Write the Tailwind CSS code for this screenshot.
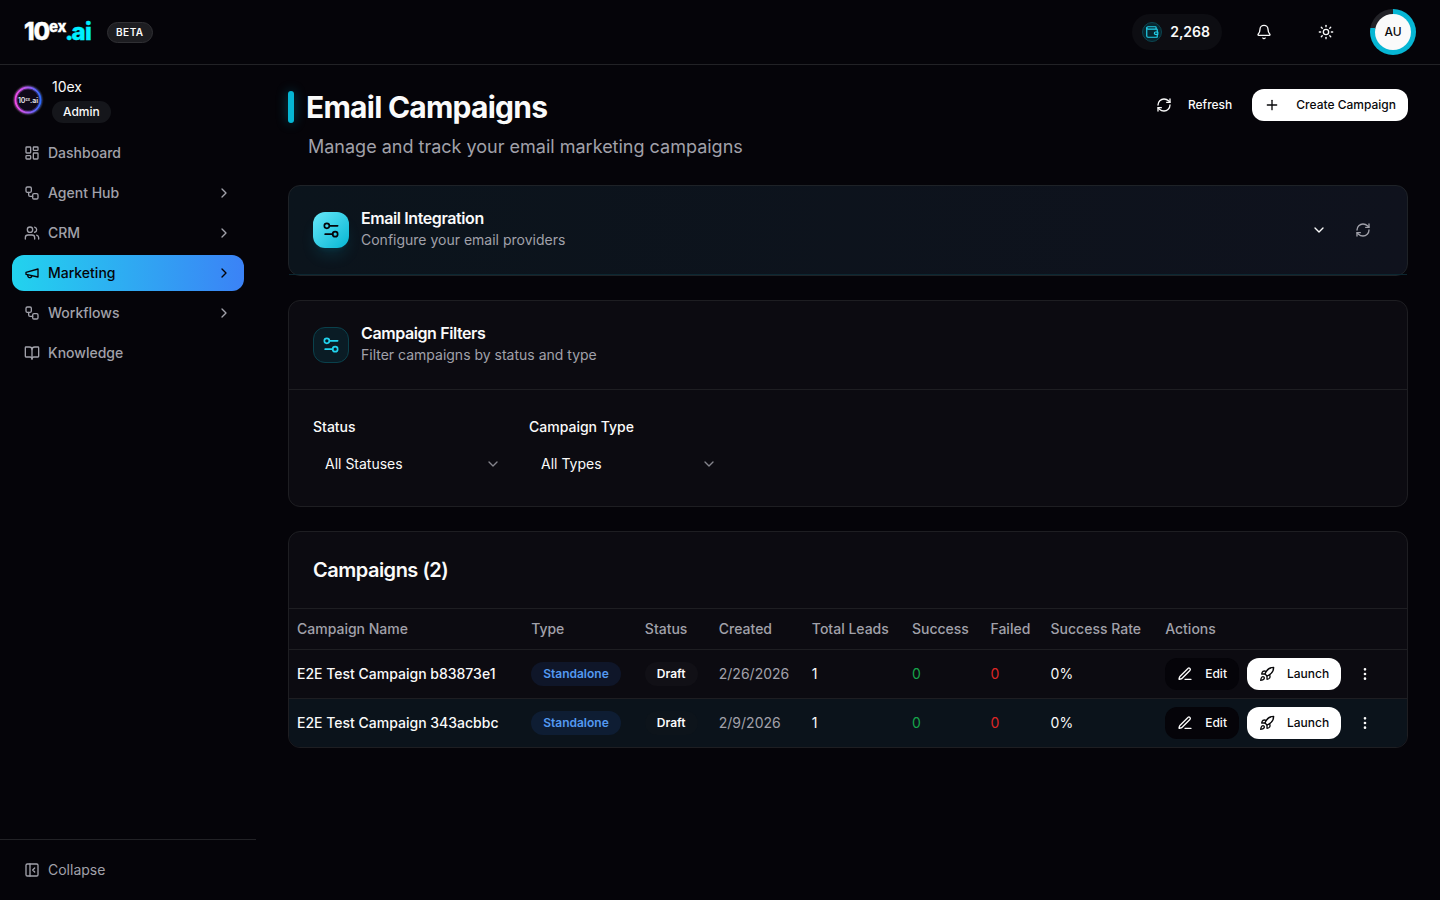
<!DOCTYPE html>
<html lang="en">
<head>
    <meta charset="UTF-8">
    <meta name="viewport" content="width=device-width, initial-scale=1.0">
    <title>10ex.ai - Email Campaigns</title>
    <script src="https://cdn.jsdelivr.net/npm/@tailwindcss/browser@4"></script>
</head>
<body class="min-h-screen flex flex-col bg-[#050409] text-[#fafafa] text-sm font-['Inter',sans-serif] antialiased">

    <!-- Icon sprite -->
    <svg class="hidden" aria-hidden="true">
        <symbol id="dashboard" viewBox="0 0 24 24"><rect width="7" height="9" x="3" y="3" rx="1"/><rect width="7" height="5" x="14" y="3" rx="1"/><rect width="7" height="9" x="14" y="12" rx="1"/><rect width="7" height="5" x="3" y="16" rx="1"/></symbol>
        <symbol id="workflow" viewBox="0 0 24 24"><rect width="8" height="8" x="3" y="3" rx="2"/><path d="M7 11v4a2 2 0 0 0 2 2h4"/><rect width="8" height="8" x="13" y="13" rx="2"/></symbol>
        <symbol id="users" viewBox="0 0 24 24"><path d="M16 21v-2a4 4 0 0 0-4-4H6a4 4 0 0 0-4 4v2"/><circle cx="9" cy="7" r="4"/><path d="M22 21v-2a4 4 0 0 0-3-3.87"/><path d="M16 3.13a4 4 0 0 1 0 7.75"/></symbol>
        <symbol id="megaphone" viewBox="0 0 24 24"><path d="m3 11 18-5v12L3 14v-3z"/><path d="M11.6 16.8a3 3 0 1 1-5.8-1.6"/></symbol>
        <symbol id="book" viewBox="0 0 24 24"><path d="M12 7v14"/><path d="M3 18a1 1 0 0 1-1-1V4a1 1 0 0 1 1-1h5a4 4 0 0 1 4 4 4 4 0 0 1 4-4h5a1 1 0 0 1 1 1v13a1 1 0 0 1-1 1h-6a3 3 0 0 0-3 3 3 3 0 0 0-3-3z"/></symbol>
        <symbol id="chevron-right" viewBox="0 0 24 24"><path d="m9 18 6-6-6-6"/></symbol>
        <symbol id="chevron-down" viewBox="0 0 24 24"><path d="m6 9 6 6 6-6"/></symbol>
        <symbol id="panel-close" viewBox="0 0 24 24"><rect width="18" height="18" x="3" y="3" rx="2"/><path d="M9 3v18"/><path d="m16 15-3-3 3-3"/></symbol>
        <symbol id="refresh" viewBox="0 0 24 24"><path d="M3 12a9 9 0 0 1 9-9 9.75 9.75 0 0 1 6.74 2.74L21 8"/><path d="M21 3v5h-5"/><path d="M21 12a9 9 0 0 1-9 9 9.75 9.75 0 0 1-6.74-2.74L3 16"/><path d="M8 16H3v5"/></symbol>
        <symbol id="plus" viewBox="0 0 24 24"><path d="M5 12h14"/><path d="M12 5v14"/></symbol>
        <symbol id="settings" viewBox="0 0 24 24"><path d="M20 7h-9"/><path d="M14 17H5"/><circle cx="17" cy="17" r="3"/><circle cx="7" cy="7" r="3"/></symbol>
        <symbol id="pen" viewBox="0 0 24 24"><path d="M12 20h9"/><path d="M16.376 3.622a1 1 0 0 1 3.002 3.002L7.368 18.635a2 2 0 0 1-.855.506l-2.872.838a.5.5 0 0 1-.62-.62l.838-2.872a2 2 0 0 1 .506-.854z"/></symbol>
        <symbol id="rocket" viewBox="0 0 24 24"><path d="M4.5 16.5c-1.5 1.26-2 5-2 5s3.74-.5 5-2c.71-.84.7-2.13-.09-2.91a2.18 2.18 0 0 0-2.91-.09z"/><path d="m12 15-3-3a22 22 0 0 1 2-3.95A12.88 12.88 0 0 1 22 2c0 2.72-.78 7.5-6 11a22.35 22.35 0 0 1-4 2z"/><path d="M9 12H4s.55-3.03 2-4c1.62-1.08 5 0 5 0"/><path d="M12 15v5s3.03-.55 4-2c1.08-1.62 0-5 0-5"/></symbol>
        <symbol id="more" viewBox="0 0 24 24"><circle cx="12" cy="12" r="1"/><circle cx="12" cy="5" r="1"/><circle cx="12" cy="19" r="1"/></symbol>
        <symbol id="bell" viewBox="0 0 24 24"><path d="M10.268 21a2 2 0 0 0 3.464 0"/><path d="M3.262 15.326A1 1 0 0 0 4 17h16a1 1 0 0 0 .74-1.673C19.41 13.956 18 12.499 18 8A6 6 0 0 0 6 8c0 4.499-1.411 5.956-2.738 7.326"/></symbol>
        <symbol id="sun" viewBox="0 0 24 24"><circle cx="12" cy="12" r="4"/><path d="M12 2v2"/><path d="M12 20v2"/><path d="m4.93 4.93 1.41 1.41"/><path d="m17.66 17.66 1.41 1.41"/><path d="M2 12h2"/><path d="M20 12h2"/><path d="m6.34 17.66-1.41 1.41"/><path d="m19.07 4.93-1.41 1.41"/></symbol>
        <symbol id="wallet" viewBox="0 0 24 24"><path d="M19 7V4a1 1 0 0 0-1-1H5a2 2 0 0 0 0 4h15a1 1 0 0 1 1 1v4"/><path d="M21 16v4a1 1 0 0 1-1 1H5a2 2 0 0 1-2-2V5"/><path d="M22 12h-4a2 2 0 0 0 0 4h4z"/></symbol>
    </svg>

    <header class="h-[65px] shrink-0 flex items-center justify-between px-6 border-b border-[#222226]">
        <div class="flex items-center gap-4">
            <a href="#" aria-label="10ex.ai home">
                <svg class="w-[67px] h-8 overflow-visible" viewBox="0 0 67 32" font-family="Inter, sans-serif" font-weight="800">
                    <text x="0 9.500" y="24" font-size="24" fill="#fff" stroke="#fff" stroke-width=".4">10</text>
                    <text x="25 33.500" y="16" font-size="15" fill="#fff" stroke="#fff" stroke-width=".3">ex</text>
                    <text x="41 47.500 61" y="24" font-size="24" fill="#00f0ff" stroke="#00f0ff" stroke-width=".4">.ai</text>
                </svg>
            </a>
            <span class="h-[21px] flex items-center px-2 rounded-full border border-[#303034] bg-[#1d1d21] text-[10px] font-semibold tracking-wider">BETA</span>
        </div>
        <div class="flex items-center gap-6">
            <div class="h-9 flex items-center gap-2 pl-[10px] pr-3 rounded-full bg-[#0d0d12]">
                <span class="size-5 flex items-center justify-center rounded-full border border-[#0b4550] bg-[#08262f] text-[#22d3ee]">
                    <svg class="size-[14px] shrink-0 fill-none stroke-current stroke-2" stroke-linecap="round" stroke-linejoin="round"><use href="#wallet"/></svg>
                </span>
                <span class="font-semibold">2,268</span>
            </div>
            <div class="flex items-center gap-[26px]">
                <button type="button" aria-label="Notifications" class="size-9 flex items-center justify-center"><svg class="size-4 fill-none stroke-current stroke-2" stroke-linecap="round" stroke-linejoin="round"><use href="#bell"/></svg></button>
                <button type="button" aria-label="Toggle theme" class="size-9 flex items-center justify-center"><svg class="size-4 fill-none stroke-current stroke-2" stroke-linecap="round" stroke-linejoin="round"><use href="#sun"/></svg></button>
                <button type="button" aria-label="Account" class="size-[46px] flex items-center justify-center rounded-full bg-[conic-gradient(#06b6d4_0_78%,#222227_78%)]">
                    <span class="size-9 flex items-center justify-center rounded-full bg-[#fafafa] text-[#09090b] text-xs font-medium">AU</span>
                </button>
            </div>
        </div>
    </header>

    <div class="flex-1 flex">
        <aside class="w-64 shrink-0 flex flex-col">
            <div class="flex items-center gap-2 p-3">
                <svg class="size-8" viewBox="0 0 32 32">
                    <defs>
                        <linearGradient id="ring" x1="0" x2="1"><stop offset="0" stop-color="#f04be8"/><stop offset=".5" stop-color="#a45cf0"/><stop offset="1" stop-color="#2f6bff"/></linearGradient>
                    </defs>
                    <circle cx="16" cy="16" r="15.500" fill="#17151d"/>
                    <circle cx="16" cy="16" r="12.500" fill="#0f0818" stroke="url(#ring)" stroke-opacity=".35" stroke-width="4"/>
                    <circle cx="16" cy="16" r="12.500" fill="none" stroke="url(#ring)" stroke-width="1.800"/>
                    <text x="16" y="18.500" text-anchor="middle" font-family="Inter, sans-serif" font-weight="600" font-size="7" fill="#e8e8ee">10<tspan font-size="4" dy="-2">ex</tspan><tspan dy="2">.ai</tspan></text>
                </svg>
                <div class="flex flex-col items-start gap-1">
                    <span class="leading-5">10ex</span>
                    <span class="h-[22px] flex items-center px-[11px] rounded-full bg-[#15161b] text-xs font-medium">Admin</span>
                </div>
            </div>
            <nav class="flex-1 flex flex-col gap-1 px-3 font-medium text-[#a1a1aa]">
                <a href="#" class="h-9 flex items-center gap-2 px-3 rounded-xl"><svg class="size-4 fill-none stroke-current stroke-2" stroke-linecap="round" stroke-linejoin="round"><use href="#dashboard"/></svg>Dashboard</a>
                <a href="#" class="h-9 flex items-center gap-2 px-3 rounded-xl"><svg class="size-4 fill-none stroke-current stroke-2" stroke-linecap="round" stroke-linejoin="round"><use href="#workflow"/></svg>Agent Hub<svg class="size-4 ml-auto fill-none stroke-current stroke-2" stroke-linecap="round" stroke-linejoin="round"><use href="#chevron-right"/></svg></a>
                <a href="#" class="h-9 flex items-center gap-2 px-3 rounded-xl"><svg class="size-4 fill-none stroke-current stroke-2" stroke-linecap="round" stroke-linejoin="round"><use href="#users"/></svg>CRM<svg class="size-4 ml-auto fill-none stroke-current stroke-2" stroke-linecap="round" stroke-linejoin="round"><use href="#chevron-right"/></svg></a>
                <a href="#" class="h-9 flex items-center gap-2 px-3 rounded-xl bg-linear-to-r/srgb from-[#22d3ee] to-[#3b82f6] text-[#050409]"><svg class="size-4 fill-none stroke-current stroke-2" stroke-linecap="round" stroke-linejoin="round"><use href="#megaphone"/></svg>Marketing<svg class="size-4 ml-auto fill-none stroke-current stroke-2" stroke-linecap="round" stroke-linejoin="round"><use href="#chevron-right"/></svg></a>
                <a href="#" class="h-9 flex items-center gap-2 px-3 rounded-xl"><svg class="size-4 fill-none stroke-current stroke-2" stroke-linecap="round" stroke-linejoin="round"><use href="#workflow"/></svg>Workflows<svg class="size-4 ml-auto fill-none stroke-current stroke-2" stroke-linecap="round" stroke-linejoin="round"><use href="#chevron-right"/></svg></a>
                <a href="#" class="h-9 flex items-center gap-2 px-3 rounded-xl"><svg class="size-4 fill-none stroke-current stroke-2" stroke-linecap="round" stroke-linejoin="round"><use href="#book"/></svg>Knowledge</a>
            </nav>
            <div class="p-3 border-t border-[#222226]">
                <button type="button" class="w-full h-9 flex items-center gap-2 px-3 text-[#a1a1aa]"><svg class="size-4 fill-none stroke-current stroke-2" stroke-linecap="round" stroke-linejoin="round"><use href="#panel-close"/></svg>Collapse</button>
            </div>
        </aside>

        <main class="flex-1 min-w-0 flex flex-col gap-6 px-8 py-6">
            <div class="flex items-start justify-between">
                <div class="flex flex-col gap-2">
                    <div class="flex items-center gap-3">
                        <span class="w-[6px] h-8 rounded-full bg-[#06b6d4] shadow-[0_0_12px_rgba(6,182,212,0.4)]"></span>
                        <h1 class="text-3xl font-bold tracking-tight">Email Campaigns</h1>
                    </div>
                    <p class="pl-5 text-lg text-[#a1a1aa]">Manage and track your email marketing campaigns</p>
                </div>
                <div class="flex gap-2 text-xs font-medium">
                    <button type="button" class="h-8 flex items-center gap-4 px-3 rounded-xl"><svg class="size-4 fill-none stroke-current stroke-2" stroke-linecap="round" stroke-linejoin="round"><use href="#refresh"/></svg>Refresh</button>
                    <button type="button" class="h-8 flex items-center gap-4 px-3 rounded-xl bg-white text-[#09090b]"><svg class="size-4 fill-none stroke-current stroke-2" stroke-linecap="round" stroke-linejoin="round"><use href="#plus"/></svg>Create Campaign</button>
                </div>
            </div>

            <section class="rounded-xl border border-[#1e2227] bg-linear-to-r/srgb from-[#0b141c] to-[#0f121d]">
                <div class="flex items-center gap-3 p-6 border-b border-[#0c2731]">
                    <span class="size-9 flex items-center justify-center rounded-xl bg-linear-to-br/srgb from-[#67e8f9] to-[#06b6d4] text-[#050409] shadow-lg shadow-[#06b6d4]/15"><svg class="size-5 fill-none stroke-current stroke-2" stroke-linecap="round" stroke-linejoin="round"><use href="#settings"/></svg></span>
                    <div class="flex flex-col gap-1">
                        <h2 class="text-base leading-4 font-semibold tracking-tight">Email Integration</h2>
                        <p class="text-[#a1a1aa]">Configure your email providers</p>
                    </div>
                    <div class="ml-auto flex items-center gap-2">
                        <button type="button" aria-label="Expand" class="w-8 h-9 flex items-center justify-center"><svg class="size-4 fill-none stroke-current stroke-2" stroke-linecap="round" stroke-linejoin="round"><use href="#chevron-down"/></svg></button>
                        <button type="button" aria-label="Reload providers" class="w-10 h-9 flex items-center justify-center text-[#a1a1aa]"><svg class="size-4 fill-none stroke-current stroke-2" stroke-linecap="round" stroke-linejoin="round"><use href="#refresh"/></svg></button>
                    </div>
                </div>
            </section>

            <section class="rounded-xl border border-[#1e1e22] bg-[#0c0b11]">
                <div class="flex items-center gap-3 p-6 border-b border-[#1e1e22]">
                    <span class="size-9 flex items-center justify-center rounded-xl border border-[#0a414c] bg-[#0a1c25] text-[#22d3ee]"><svg class="size-5 fill-none stroke-current stroke-2" stroke-linecap="round" stroke-linejoin="round"><use href="#settings"/></svg></span>
                    <div class="flex flex-col gap-1">
                        <h2 class="text-base leading-4 font-semibold tracking-tight">Campaign Filters</h2>
                        <p class="text-[#a1a1aa]">Filter campaigns by status and type</p>
                    </div>
                </div>
                <div class="flex flex-wrap gap-4 p-6">
                    <div class="w-[200px]">
                        <label for="status" class="block mb-[6px] leading-[26px] font-medium">Status</label>
                        <div class="relative">
                            <select id="status" class="w-full h-9 appearance-none px-3 rounded-xl bg-transparent">
                                <option>All Statuses</option>
                            </select>
                            <svg class="absolute right-3 top-[10px] size-4 pointer-events-none text-[#85858c] fill-none stroke-current stroke-2" stroke-linecap="round" stroke-linejoin="round"><use href="#chevron-down"/></svg>
                        </div>
                    </div>
                    <div class="w-[200px]">
                        <label for="type" class="block mb-[6px] leading-[26px] font-medium">Campaign Type</label>
                        <div class="relative">
                            <select id="type" class="w-full h-9 appearance-none px-3 rounded-xl bg-transparent">
                                <option>All Types</option>
                            </select>
                            <svg class="absolute right-3 top-[10px] size-4 pointer-events-none text-[#85858c] fill-none stroke-current stroke-2" stroke-linecap="round" stroke-linejoin="round"><use href="#chevron-down"/></svg>
                        </div>
                    </div>
                </div>
            </section>

            <section class="rounded-xl border border-[#1e1e22] bg-[#0c0b11] overflow-hidden">
                <h2 class="p-6 text-xl leading-7 font-semibold tracking-tight border-b border-[#1e1e22]">Campaigns (2)</h2>
                <table class="w-full text-left">
                    <thead>
                        <tr class="border-b border-[#1e1e22] text-[#a1a1aa]">
                            <th class="h-10 px-2 font-medium">Campaign Name</th>
                            <th class="px-2 font-medium">Type</th>
                            <th class="px-2 font-medium">Status</th>
                            <th class="px-2 font-medium">Created</th>
                            <th class="px-2 font-medium">Total Leads</th>
                            <th class="px-2 font-medium">Success</th>
                            <th class="px-2 font-medium">Failed</th>
                            <th class="px-2 font-medium">Success Rate</th>
                            <th class="px-2 font-medium">Actions</th>
                        </tr>
                    </thead>
                    <tbody>
                        <tr class="border-b border-[#1e1e22]">
                            <td class="p-2 font-medium">E2E Test Campaign b83873e1</td>
                            <td class="p-2"><span class="inline-flex h-6 items-center px-3 rounded-full bg-[#0f1629] text-[#5399f0] text-xs font-semibold">Standalone</span></td>
                            <td class="p-2"><span class="inline-flex h-6 items-center px-3 rounded-full bg-[#111016] text-xs font-semibold">Draft</span></td>
                            <td class="p-2 text-[#a1a1aa]">2/26/2026</td>
                            <td class="p-2">1</td>
                            <td class="p-2 text-[#16a34a]">0</td>
                            <td class="p-2 text-[#dc2626]">0</td>
                            <td class="p-2">0%</td>
                            <td class="p-2">
                                <div class="flex gap-2 text-xs font-medium">
                                    <button type="button" class="h-8 flex items-center gap-3 px-3 rounded-xl bg-[#050409]"><svg class="size-4 fill-none stroke-current stroke-2" stroke-linecap="round" stroke-linejoin="round"><use href="#pen"/></svg>Edit</button>
                                    <button type="button" class="h-8 flex items-center gap-3 px-3 rounded-xl bg-white text-[#09090b]"><svg class="size-4 fill-none stroke-current stroke-2" stroke-linecap="round" stroke-linejoin="round"><use href="#rocket"/></svg>Launch</button>
                                    <button type="button" aria-label="More actions" class="size-8 flex items-center justify-center"><svg class="size-4 fill-none stroke-current stroke-2" stroke-linecap="round" stroke-linejoin="round"><use href="#more"/></svg></button>
                                </div>
                            </td>
                        </tr>
                        <tr class="bg-[#0b131b]">
                            <td class="p-2 font-medium">E2E Test Campaign 343acbbc</td>
                            <td class="p-2"><span class="inline-flex h-6 items-center px-3 rounded-full bg-[#0e1d33] text-[#5399f0] text-xs font-semibold">Standalone</span></td>
                            <td class="p-2"><span class="inline-flex h-6 items-center px-3 rounded-full bg-[#0d141b] text-xs font-semibold">Draft</span></td>
                            <td class="p-2 text-[#a1a1aa]">2/9/2026</td>
                            <td class="p-2">1</td>
                            <td class="p-2 text-[#16a34a]">0</td>
                            <td class="p-2 text-[#dc2626]">0</td>
                            <td class="p-2">0%</td>
                            <td class="p-2">
                                <div class="flex gap-2 text-xs font-medium">
                                    <button type="button" class="h-8 flex items-center gap-3 px-3 rounded-xl bg-[#050409]"><svg class="size-4 fill-none stroke-current stroke-2" stroke-linecap="round" stroke-linejoin="round"><use href="#pen"/></svg>Edit</button>
                                    <button type="button" class="h-8 flex items-center gap-3 px-3 rounded-xl bg-white text-[#09090b]"><svg class="size-4 fill-none stroke-current stroke-2" stroke-linecap="round" stroke-linejoin="round"><use href="#rocket"/></svg>Launch</button>
                                    <button type="button" aria-label="More actions" class="size-8 flex items-center justify-center"><svg class="size-4 fill-none stroke-current stroke-2" stroke-linecap="round" stroke-linejoin="round"><use href="#more"/></svg></button>
                                </div>
                            </td>
                        </tr>
                    </tbody>
                </table>
            </section>
        </main>
    </div>
</body>
</html>
